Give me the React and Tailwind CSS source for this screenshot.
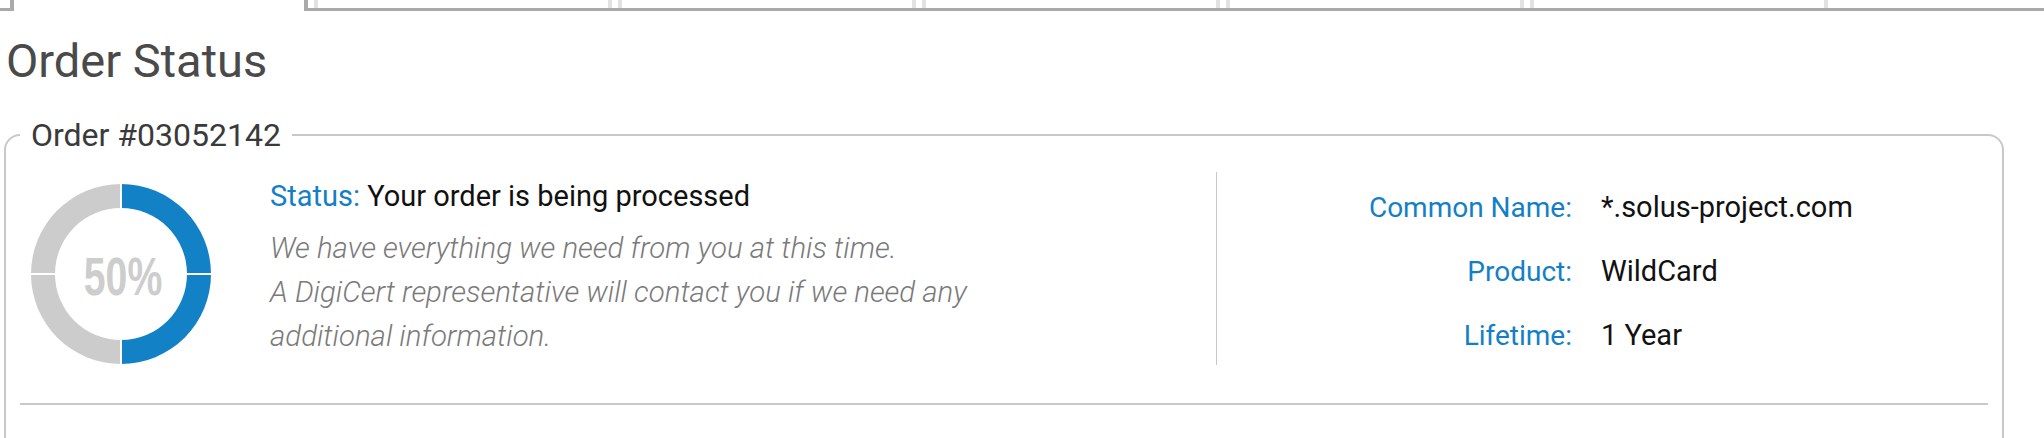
import React from "react";

const FONT = { fontFamily: "Roboto, 'Open Sans', 'Liberation Sans', sans-serif" };

function ProgressRing() {
  return (
    <svg width="180" height="180" viewBox="0 0 180 180" className="block">
      {/* remaining half */}
      <path d="M90,0 A90,90 0 0 0 90,180 L90,156 A66,66 0 0 1 90,24 Z" fill="#cccccc" />
      {/* completed half */}
      <path d="M90,0 A90,90 0 0 1 90,180 L90,156 A66,66 0 0 0 90,24 Z" fill="#1281c6" />
      {/* quarter separators */}
      <rect x="89" y="0" width="2" height="180" fill="#ffffff" />
      <rect x="0" y="89" width="180" height="2" fill="#ffffff" />
      <text
        transform="translate(92 111) scale(0.74 1)"
        textAnchor="middle"
        fontFamily="'Liberation Sans', Arial, sans-serif"
        fontWeight="700"
        fontSize="53"
        fill="#cdcdcd"
      >
        50%
      </text>
    </svg>
  );
}

function Detail({ label, value }) {
  return (
    <>
      <div className="h-[64px] flex items-center justify-end text-[28px] text-[#1380c6]">{label}</div>
      <div className="h-[64px] flex items-center text-[29px] text-[#111111]">{value}</div>
    </>
  );
}

export default function App() {
  return (
    <div className="w-[2044px] h-[438px] overflow-hidden bg-white" style={FONT}>
      {/* tab strip */}
      <div className="flex h-[11px]">
        <div className="w-[10px] border-b-[3px] border-[#aaaaaa]" />
        <div className="w-[298px] border-x-4 border-[#aaaaaa]" />
        <div className="flex-1 flex gap-[6px] pl-[6px] border-b-[3px] border-[#aaaaaa]">
          <div className="w-[298px] border-x-4 border-[#e2e2e2]" />
          <div className="w-[298px] border-x-4 border-[#e2e2e2]" />
          <div className="w-[298px] border-x-4 border-[#e2e2e2]" />
          <div className="w-[298px] border-x-4 border-[#e2e2e2]" />
          <div className="w-[298px] border-x-4 border-[#e2e2e2]" />
        </div>
      </div>

      <div className="px-[4px]">
        <h1 className="mt-[24px] ml-[2px] text-[47px] leading-[52px] font-normal text-[#4a4a4a]">Order Status</h1>

        <fieldset className="mt-[30px] w-[2000px] border-2 border-[#c8c8c8] rounded-[16px] px-[14px] pt-[19px] pb-[60px]">
          <legend className="px-[11px] text-[32px] leading-[36px] text-[#3a3a3a]">Order #03052142</legend>

          <div className="flex h-[193px]">
            <div className="w-[1196px] flex">
              <div className="ml-[11px] mt-[12px]">
                <ProgressRing />
              </div>
              <div className="ml-[59px] mt-[7px]">
                <p className="text-[29px] leading-[34px] text-[#111111]">
                  <span className="text-[#1380c6]">Status:</span> Your order is being processed
                </p>
                <p className="mt-[13px] text-[29.4px] leading-[44px] italic font-light text-[#7a7a7a]">
                  We have everything we need from you at this time.
                  <br />
                  A DigiCert representative will contact you if we need any
                  <br />
                  additional information.
                </p>
              </div>
            </div>
            <div className="flex-1 border-l border-[#c8c8c8] pt-[4px] grid grid-cols-[355px_1fr] gap-x-[29px] content-start">
              <Detail label="Common Name:" value="*.solus-project.com" />
              <Detail label="Product:" value="WildCard" />
              <Detail label="Lifetime:" value="1 Year" />
            </div>
          </div>

          <div className="mt-[38px] h-[2px] bg-[#c9c9c9]" />
        </fieldset>
      </div>
    </div>
  );
}
